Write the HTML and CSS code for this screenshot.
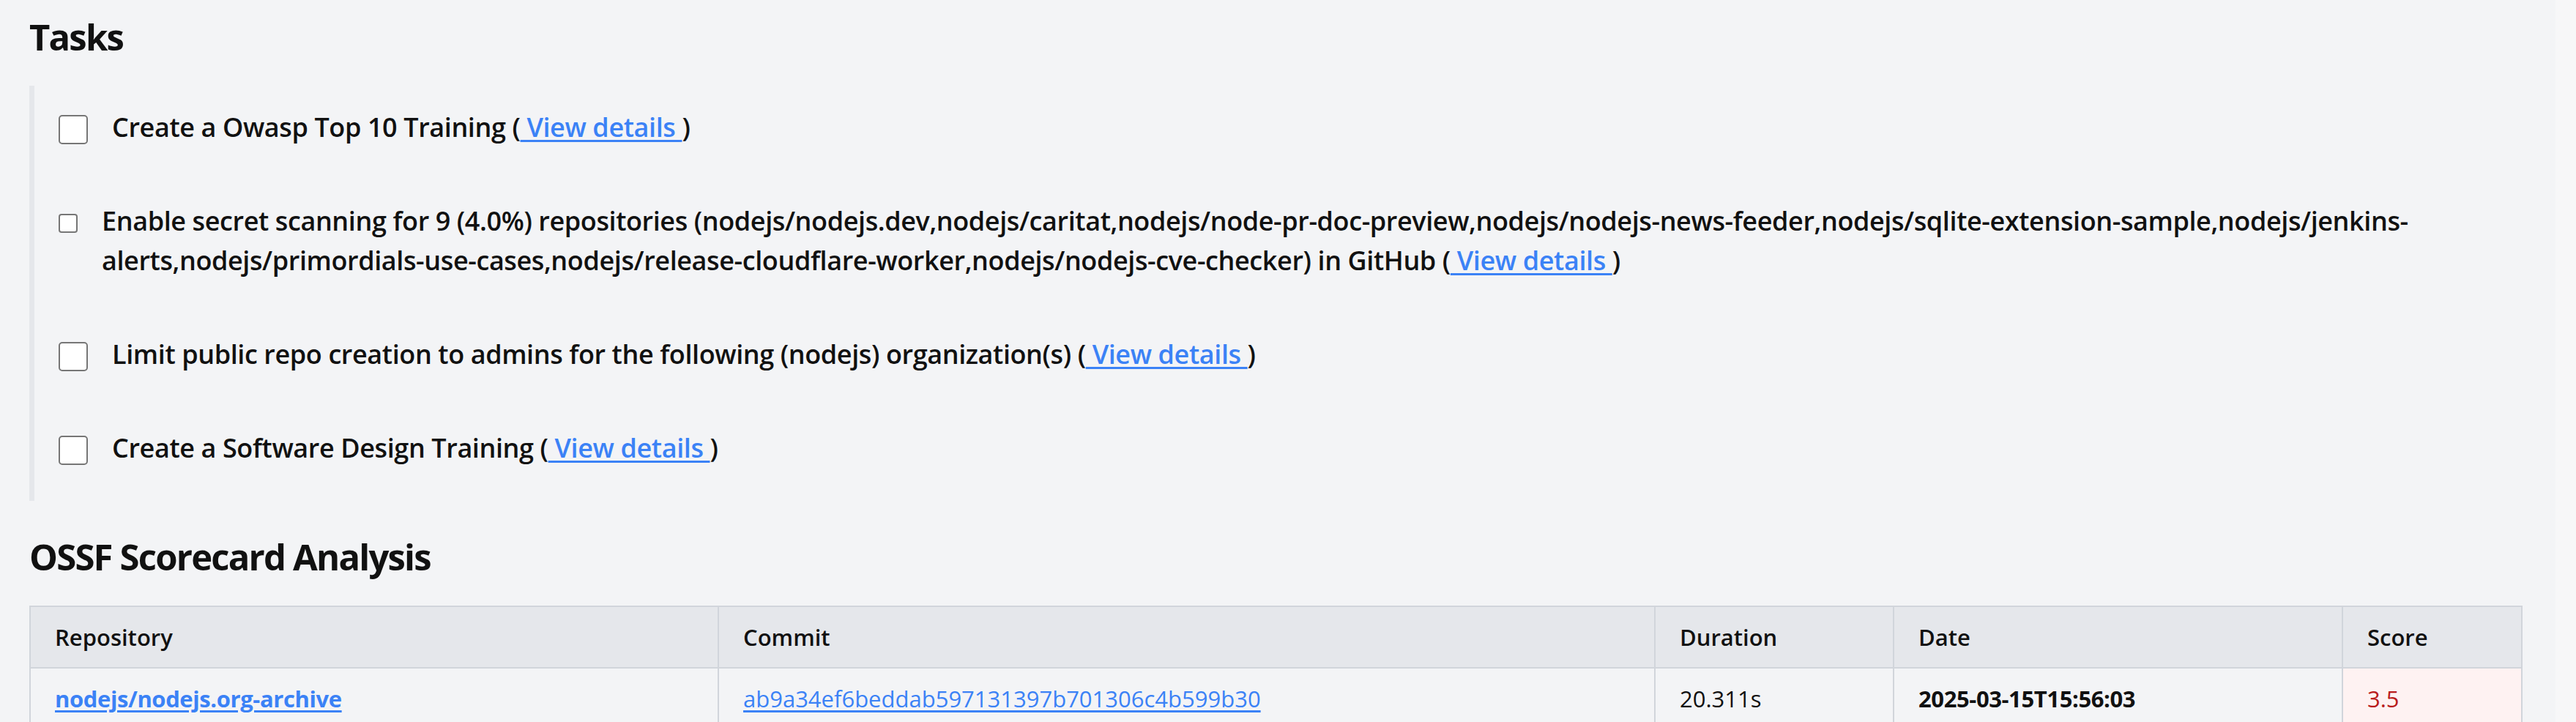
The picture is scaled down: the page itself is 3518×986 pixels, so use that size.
FILE: index.html
```html
<!DOCTYPE html>
<html lang="en">
<head>
<meta charset="utf-8">
<title>Tasks and OSSF Scorecard</title>
<link rel="stylesheet" href="styles.css">
</head>
<body>
<div class="page">
  <main class="content">
    <h2 class="section-title">Tasks</h2>
    <ul class="task-list">
      <li class="task">
        <input type="checkbox" class="task-check">
        <span class="task-text">Create a Owasp Top 10 Training (<a href="#" class="link"> View details </a>)</span>
      </li>
      <li class="task">
        <input type="checkbox" class="task-check task-check--shrunk">
        <span class="task-text">Enable secret scanning for 9 (4.0%) repositories (nodejs/nodejs.dev,nodejs/caritat,nodejs/node-pr-doc-preview,nodejs/nodejs-news-feeder,nodejs/sqlite-extension-sample,nodejs/jenkins-alerts,nodejs/primordials-use-cases,nodejs/release-cloudflare-worker,nodejs/nodejs-cve-checker) in GitHub (<a href="#" class="link"> View details </a>)</span>
      </li>
      <li class="task">
        <input type="checkbox" class="task-check">
        <span class="task-text">Limit public repo creation to admins for the following (nodejs) organization(s) (<a href="#" class="link"> View details </a>)</span>
      </li>
      <li class="task">
        <input type="checkbox" class="task-check">
        <span class="task-text">Create a Software Design Training (<a href="#" class="link"> View details </a>)</span>
      </li>
    </ul>

    <h2 class="section-title">OSSF Scorecard Analysis</h2>
    <table class="score-table">
      <colgroup>
        <col class="col-repo">
        <col class="col-commit">
        <col class="col-duration">
        <col class="col-date">
        <col class="col-score">
      </colgroup>
      <thead>
        <tr>
          <th>Repository</th>
          <th>Commit</th>
          <th>Duration</th>
          <th>Date</th>
          <th>Score</th>
        </tr>
      </thead>
      <tbody>
        <tr>
          <td><a href="#" class="link link--strong">nodejs/nodejs.org-archive</a></td>
          <td><a href="#" class="link link--plain">ab9a34ef6beddab597131397b701306c4b599b30</a></td>
          <td class="cell-duration">20.311s</td>
          <td class="cell-date">2025-03-15T15:56:03</td>
          <td class="cell-score">3.5</td>
        </tr>
      </tbody>
    </table>
  </main>
  <div class="scroll-track"></div>
</div>
</body>
</html>
```

FILE: styles.css
```css
* {
  box-sizing: border-box;
}

html, body {
  margin: 0;
  padding: 0;
}

body {
  background: #f3f4f6;
  color: #111;
  font-family: "Open Sans", "Noto Sans", "DejaVu Sans", sans-serif;
  overflow: hidden;
}

.page {
  display: flex;
  min-height: 986px;
}

.content {
  flex: 1;
  min-width: 0;
  padding: 20px 47px 0 40px;
}

.scroll-track {
  width: 28px;
  flex: none;
  background: #f7f7f8;
}

.section-title {
  margin: 0 0 37px;
  font-size: 49px;
  line-height: 60px;
  font-weight: 700;
  letter-spacing: -1.8px;
}

.task-list {
  list-style: none;
  margin: 0 0 46px;
  padding: 30px 0 45px 33px;
  border-left: 7px solid #e5e7eb;
  display: flex;
  flex-direction: column;
  gap: 74px;
}

.task {
  display: flex;
  align-items: flex-start;
}

.task-check {
  appearance: none;
  -webkit-appearance: none;
  flex: none;
  width: 40px;
  height: 40px;
  margin: 10px 33px 0 0;
  background: #fff;
  border: 2px solid #767676;
  border-radius: 5px;
}

.task-check--shrunk {
  width: 26px;
  height: 26px;
  margin-top: 17px;
  border-radius: 4px;
}

.task-text {
  font-size: 36px;
  line-height: 54px;
  font-weight: 600;
  letter-spacing: -0.4px;
}

.link {
  color: #3b82f6;
  text-decoration: underline;
  text-decoration-thickness: 3px;
  text-underline-offset: 4px;
}

.score-table {
  width: 100%;
  border-collapse: collapse;
  table-layout: fixed;
  border: 2px solid #d1d5db;
  font-size: 31px;
  line-height: 46px;
}

.col-repo { width: 940px; }
.col-commit { width: 1279px; }
.col-duration { width: 326px; }
.col-date { width: 613px; }
.col-score { width: 245px; }

.score-table th,
.score-table td {
  padding: 18px 33px;
  text-align: left;
  border: 2px solid #d1d5db;
  white-space: nowrap;
}

.score-table th {
  background: #e5e7eb;
  font-weight: 600;
  border-top: none;
}

.score-table td {
  border-bottom: none;
  vertical-align: middle;
}

.link--strong {
  font-weight: 700;
  letter-spacing: -0.4px;
}

.link--plain {
  font-weight: 400;
}

.cell-duration {
  font-weight: 400;
}

.cell-date {
  font-weight: 700;
  letter-spacing: -0.4px;
}

.cell-score {
  background: #fef2f2;
  color: #b91c1c;
  font-weight: 500;
}
```
